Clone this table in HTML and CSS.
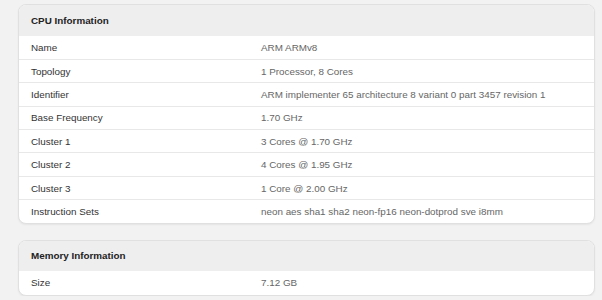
FILE: index.html
```html
<!DOCTYPE html>
<html lang="en">
<head>
<meta charset="utf-8">
<title>System Information</title>
<link rel="stylesheet" href="styles.css">
</head>
<body>
<main class="page">
  <section class="card">
    <div class="card-header">CPU Information</div>
    <div class="row"><div class="label">Name</div><div class="value">ARM ARMv8</div></div>
    <div class="row"><div class="label">Topology</div><div class="value">1 Processor, 8 Cores</div></div>
    <div class="row"><div class="label">Identifier</div><div class="value">ARM implementer 65 architecture 8 variant 0 part 3457 revision 1</div></div>
    <div class="row"><div class="label">Base Frequency</div><div class="value">1.70 GHz</div></div>
    <div class="row"><div class="label">Cluster 1</div><div class="value">3 Cores @ 1.70 GHz</div></div>
    <div class="row"><div class="label">Cluster 2</div><div class="value">4 Cores @ 1.95 GHz</div></div>
    <div class="row"><div class="label">Cluster 3</div><div class="value">1 Core @ 2.00 GHz</div></div>
    <div class="row"><div class="label">Instruction Sets</div><div class="value">neon aes sha1 sha2 neon-fp16 neon-dotprod sve i8mm</div></div>
  </section>
  <section class="card">
    <div class="card-header">Memory Information</div>
    <div class="row"><div class="label">Size</div><div class="value">7.12 GB</div></div>
  </section>
</main>
</body>
</html>
```
FILE: styles.css
```css
html, body {
  margin: 0;
  padding: 0;
  background: #f2f2f2;
}
body {
  font-family: "Liberation Sans", Arial, sans-serif;
  font-size: 9.85px;
  color: #333;
}
.page {
  display: flex;
  flex-direction: column;
  gap: 16px;
  padding: 4px 7px 0 18px;
}
.card {
  background: #fff;
  border: 1px solid #e0e0e0;
  border-radius: 8px;
  overflow: hidden;
  box-shadow: 0 1px 2px rgba(0, 0, 0, 0.06);
}
.card-header {
  height: 30.5px;
  display: flex;
  align-items: center;
  padding: 0 12px;
  background: #eeeeee;
  font-weight: bold;
  color: #222;
}
.row {
  display: grid;
  grid-template-columns: 40% 60%;
  height: 23.4px;
  box-sizing: border-box;
  align-items: center;
  border-top: 1px solid #e8e8e8;
}
.card-header + .row {
  border-top: none;
}
.label {
  padding: 0 12px;
  color: #333;
}
.value {
  padding: 0 12px;
  color: #666;
  white-space: nowrap;
}
```
